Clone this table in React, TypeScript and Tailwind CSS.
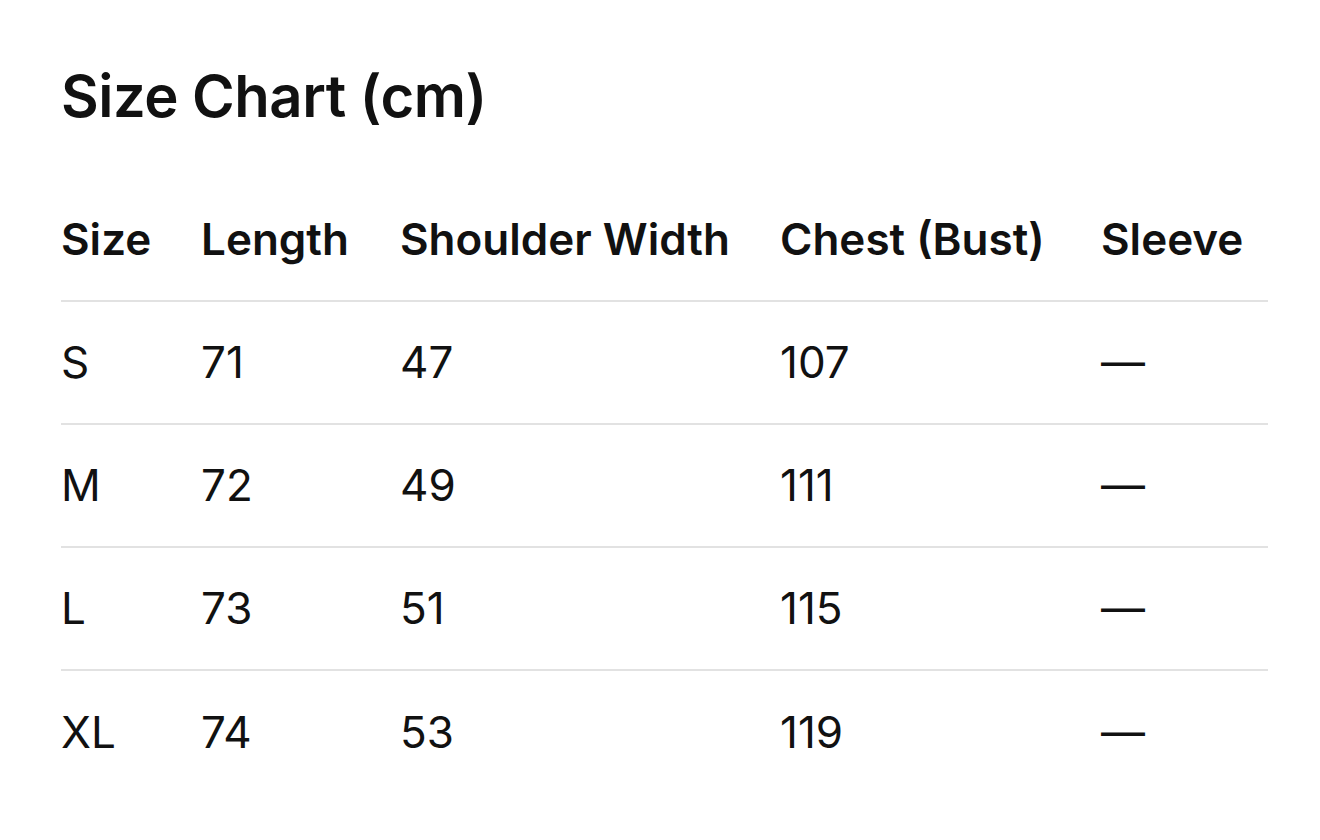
const rows = [
  { size: "S", length: "71", shoulder: "47", chest: "107", sleeve: "—" },
  { size: "M", length: "72", shoulder: "49", chest: "111", sleeve: "—" },
  { size: "L", length: "73", shoulder: "51", chest: "115", sleeve: "—" },
  { size: "XL", length: "74", shoulder: "53", chest: "119", sleeve: "—" },
];

const cols = "grid grid-cols-[140px_199px_380px_321px_166px]";

export default function App() {
  return (
    <div
      className="min-h-screen bg-white text-[#111111] px-[61px] pt-[61px]"
      style={{ fontFamily: "Inter, 'Noto Sans', sans-serif" }}
    >
      <h1 className="text-[58px] font-semibold leading-[70px] tracking-[-0.5px]">
        Size Chart (cm)
      </h1>

      <div className="mt-[48px] w-[1207px]">
        <div className={`${cols} h-[123px] items-center border-b-2 border-[#e2e2e2] text-[44px] leading-[53px] font-semibold`}>
          <div>Size</div>
          <div>Length</div>
          <div>Shoulder Width</div>
          <div>Chest (Bust)</div>
          <div>Sleeve</div>
        </div>
        {rows.map((r, i) => (
          <div
            key={r.size}
            className={`${cols} h-[123px] items-center text-[44px] leading-[53px] ${i < rows.length - 1 ? "border-b-2 border-[#e2e2e2]" : ""}`}
          >
            <div>{r.size}</div>
            <div>{r.length}</div>
            <div>{r.shoulder}</div>
            <div>{r.chest}</div>
            <div>{r.sleeve}</div>
          </div>
        ))}
      </div>
    </div>
  );
}
